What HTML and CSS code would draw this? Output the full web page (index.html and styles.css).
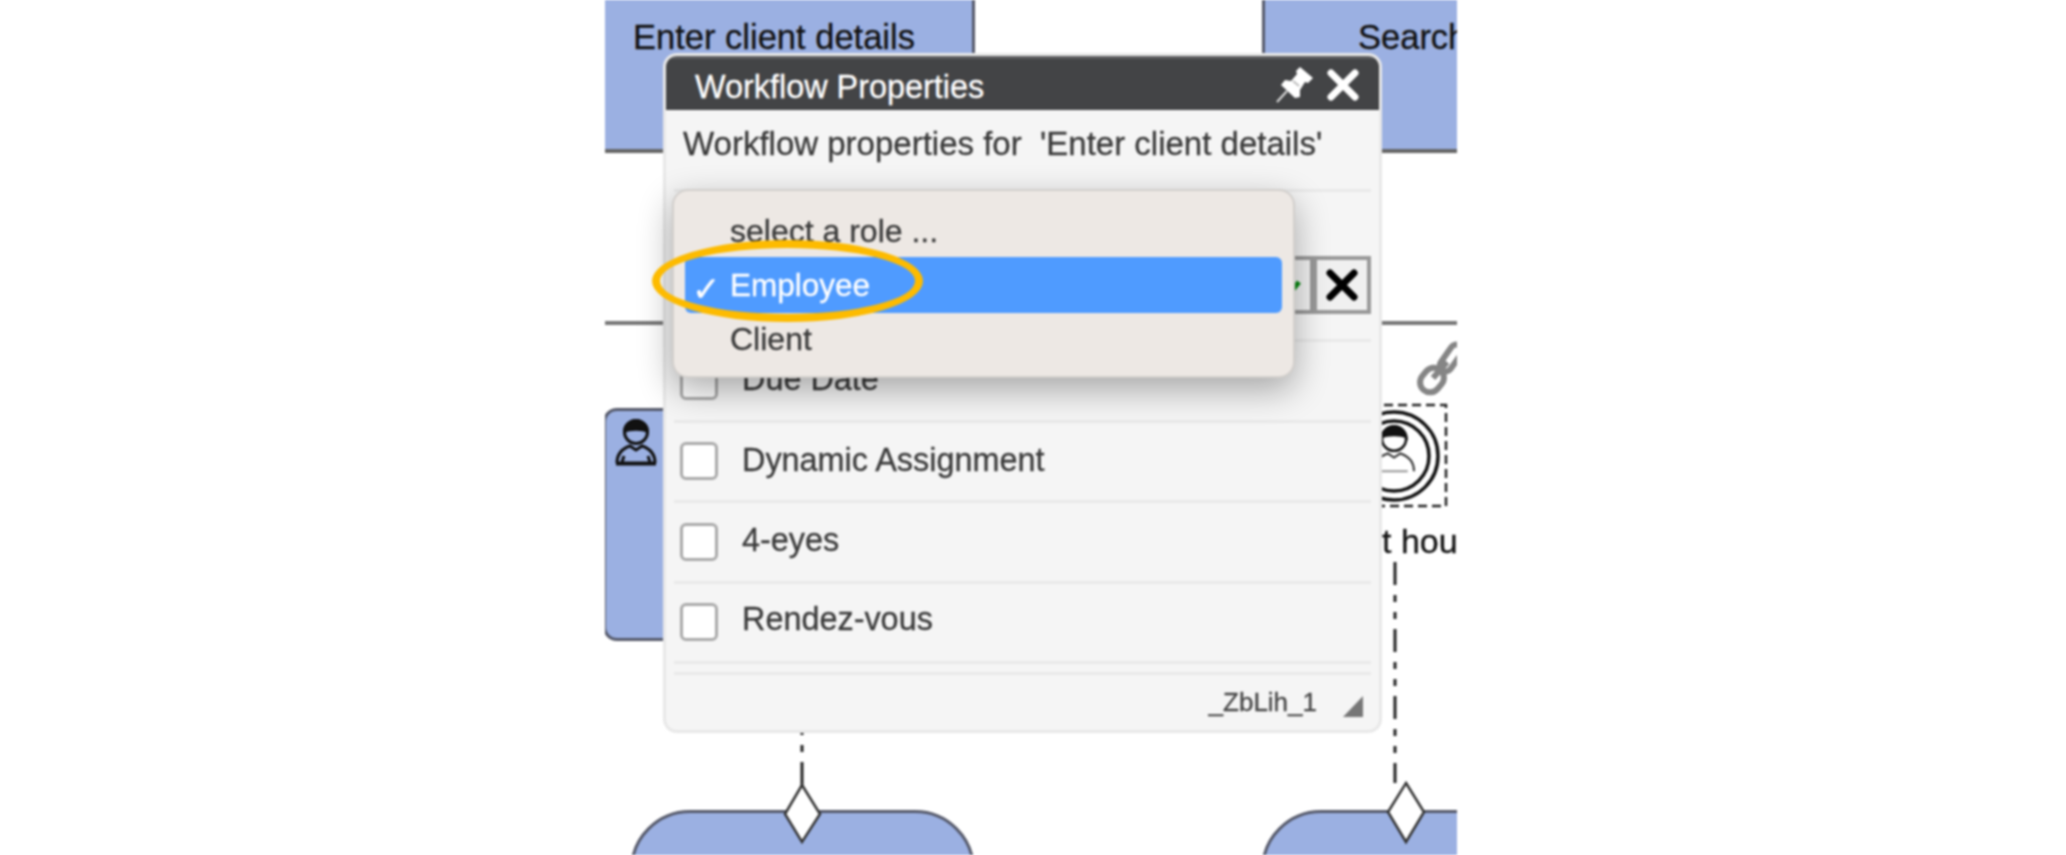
FILE: index.html
```html
<!DOCTYPE html>
<html lang="en">
<head>
    <meta charset="UTF-8">
    <meta name="viewport" content="width=device-width, initial-scale=1.0">
    <title>Workflow Properties</title>
    <link rel="stylesheet" href="styles.css">
</head>
<body>
<div class="stage">
    <!-- diagram behind the dialog -->
    <div class="node node-top node-enter">Enter client details</div>
    <div class="node node-top node-search">Search</div>
    <div class="node node-lane">
        <svg class="person person-lane" viewBox="0 0 42 48">
            <path d="M9 14a12 12 0 0 1 24 0c-6-3-18-3-24 0z" fill="#111" stroke="#111" stroke-width="2"/>
            <circle cx="21" cy="14" r="11.5" fill="none" stroke="#111" stroke-width="3"/>
            <path d="M2 45c0-10 7-15 13-17l6 4 6-4c6 2 13 7 13 17" fill="none" stroke="#111" stroke-width="3"/>
            <path d="M9 38l-2 6M33 38l2 6" stroke="#111" stroke-width="3"/>
            <path d="M1 45.500h40" stroke="#111" stroke-width="4"/>
        </svg>
    </div>
    <div class="node node-bottom node-bottom-left"></div>
    <div class="node node-bottom node-bottom-right"></div>
    <div class="lane-line"></div>
    <div class="hours-label">t hou</div>

    <svg class="edges" viewBox="0 0 852 855">
        <path class="flow" d="M197 785V733"/>
        <path class="flow" d="M790 562V783"/>
        <polygon class="gate" points="197,785 215,814 197,842 180,814"/>
        <polygon class="gate" points="801,783 819,812 801,842 783,812"/>
        <rect class="selection" x="737" y="405" width="104" height="101"/>
        <circle class="ring" cx="789" cy="456" r="44"/>
        <circle class="ring" cx="789" cy="456" r="35"/>
        <g transform="translate(767 424) scale(1.05)">
            <path d="M9 14a12 12 0 0 1 24 0c-6-3-18-3-24 0z" fill="#111" stroke="#111" stroke-width="2"/>
            <circle cx="21" cy="14" r="11.500" fill="#fff" stroke="#111" stroke-width="2.500"/>
            <path d="M9 14a12 12 0 0 1 24 0c-6-3-18-3-24 0z" fill="#111"/>
            <path d="M2 45c0-10 7-15 13-17l6 4 6-4c6 2 13 7 13 17" fill="none" stroke="#333" stroke-width="2"/>
            <path d="M8 45h26" stroke="#999" stroke-width="2"/>
        </g>
        <g class="chain">
            <rect x="-13" y="-10" width="26" height="20" rx="10" transform="translate(827 380) rotate(-50)"/>
            <rect x="-15" y="-6" width="30" height="12" rx="6" transform="translate(846 358) rotate(-55)"/>
            <path d="M828 378L842 362"/>
        </g>
    </svg>

    <!-- dialog -->
    <div class="dialog">
        <div class="dialog-head">
            <span class="dialog-title">Workflow Properties</span>
            <svg class="pin-icon" viewBox="0 0 37 37">
                <path d="M24 1L37 12l-5 5-3-1-5 8v7l-5 1L5 19l4-5 6 1 6-7-1-3z" fill="#fff"/>
                <path d="M17 15l6 5" stroke="#bbb" stroke-width="2"/>
                <path d="M11 25L1 36" stroke="#ddd" stroke-width="2"/>
            </svg>
            <svg class="close-icon" viewBox="0 0 32 32">
                <path d="M4 4l24 24M28 4L4 28" stroke="#fff" stroke-width="7" stroke-linecap="round"/>
            </svg>
        </div>
        <div class="dialog-intro">Workflow properties for&nbsp;&nbsp;'Enter client details'</div>
        <div class="role-row">
            <button class="square-btn">
                <svg class="ok-icon" viewBox="0 0 30 30">
                    <path d="M6 24l8 5L28 12" fill="none" stroke="#0a8a12" stroke-width="5"/>
                </svg>
            </button>
            <button class="square-btn">
                <svg class="cancel-icon" viewBox="0 0 32 32">
                    <path d="M4 4l24 24M28 4L4 28" stroke="#000" stroke-width="7" stroke-linecap="round"/>
                </svg>
            </button>
        </div>
        <div class="check-row"><span class="box"></span><span>Due Date</span></div>
        <div class="check-row"><span class="box"></span><span>Dynamic Assignment</span></div>
        <div class="check-row"><span class="box"></span><span>4-eyes</span></div>
        <div class="check-row check-row-last"><span class="box"></span><span>Rendez-vous</span></div>
        <div class="dialog-gap"></div>
        <div class="dialog-foot">
            <span class="dialog-id">_ZbLih_1</span>
            <svg class="grip" viewBox="0 0 22 24">
                <path d="M1 23L21 2v21z" fill="#777"/>
            </svg>
        </div>
    </div>

    <!-- open role menu -->
    <div class="menu">
        <div class="menu-item">select a role ...</div>
        <div class="menu-item menu-item-active"><span class="tick">✓</span>Employee</div>
        <div class="menu-item">Client</div>
    </div>
    <div class="callout"></div>
</div>
</body>
</html>
```

FILE: styles.css
```css
body {
    margin: 0;
    background-color: white;
    font-family: "Liberation Sans", Arial, sans-serif;
}

.stage {
    position: relative;
    width: 852px;
    height: 855px;
    margin-left: 605px;
    overflow: hidden;
    filter: blur(0.8px);
    -webkit-text-stroke: 0.3px currentColor;
}

/* diagram */
.node {
    position: absolute;
    box-sizing: border-box;
    background-color: #9bb0e2;
    border: 3px solid #55596a;
    color: #111;
    font-size: 34.500px;
}

.node-top {
    top: -20px;
    width: 402px;
    height: 173px;
    padding-top: 35px;
    border-bottom-width: 4px;
    border-bottom-color: #666;
}

.node-enter {
    left: -32px;
    text-align: center;
}

.node-search {
    left: 657px;
    padding-left: 93px;
}

.node-lane {
    left: -2px;
    top: 408px;
    width: 120px;
    height: 233px;
    border-radius: 14px;
}

.person-lane {
    position: absolute;
    left: 9px;
    top: 7px;
    width: 42px;
    height: 48px;
}

.node-bottom {
    top: 810px;
    width: 345px;
    height: 120px;
    border-radius: 62px;
}

.node-bottom-left {
    left: 25px;
}

.node-bottom-right {
    left: 656px;
}

.lane-line {
    position: absolute;
    left: 0;
    right: 0;
    top: 321px;
    height: 4px;
    background-color: #777;
}

.hours-label {
    position: absolute;
    left: 777px;
    top: 521px;
    font-size: 34px;
    line-height: 40px;
    white-space: nowrap;
    color: #111;
}

.edges {
    position: absolute;
    left: 0;
    top: 0;
    width: 852px;
    height: 855px;
}

.flow {
    fill: none;
    stroke: #222;
    stroke-width: 3;
    stroke-dasharray: 23 10 7 10 7 10;
}

.gate {
    fill: white;
    stroke: #333;
    stroke-width: 2.5;
}

.selection {
    fill: none;
    stroke: #222;
    stroke-width: 2.5;
    stroke-dasharray: 9 5;
}

.ring {
    fill: none;
    stroke: #111;
    stroke-width: 3.500;
}

.chain {
    fill: none;
    stroke: #858585;
    stroke-width: 6;
}

/* dialog */
.dialog {
    position: absolute;
    left: 58px;
    top: 53px;
    box-sizing: border-box;
    display: flex;
    flex-direction: column;
    width: 719px;
    height: 680px;
    border: 3px solid #e8e8e8;
    border-radius: 14px;
    background-color: #f5f5f5;
    color: #3a3a3a;
    font-size: 32.400px;
    overflow: hidden;
}

.dialog-head {
    display: flex;
    align-items: center;
    flex: none;
    height: 54px;
    box-sizing: border-box;
    padding: 0 20px 0 29px;
    background-color: #434446;
    border-top: 3px solid #5c5d5f;
}

.dialog-title {
    flex: 1;
    padding-top: 5px;
    color: white;
}

.pin-icon {
    width: 37px;
    height: 37px;
    margin-right: 14px;
}

.close-icon {
    width: 32px;
    height: 32px;
}

.dialog-intro {
    flex: none;
    box-sizing: border-box;
    height: 82px;
    margin: 0 8px;
    padding: 15px 0 0 9px;
    border-bottom: 3px solid #e9e9e9;
    font-size: 33px;
}

.role-row {
    display: flex;
    justify-content: flex-end;
    flex: none;
    box-sizing: border-box;
    height: 150px;
    margin: 0 8px;
    padding-top: 64px;
    border-bottom: 3px solid #e9e9e9;
}

.square-btn {
    box-sizing: border-box;
    display: flex;
    align-items: center;
    justify-content: center;
    width: 57px;
    height: 58px;
    margin: 0;
    padding: 0;
    background-color: #f0f0f0;
    border: 4px solid #999;
}

.square-btn + .square-btn {
    border-left-width: 3px;
}

.ok-icon {
    width: 30px;
    height: 30px;
}

.cancel-icon {
    width: 32px;
    height: 32px;
}

.check-row {
    display: flex;
    align-items: center;
    gap: 24px;
    flex: none;
    box-sizing: border-box;
    height: 80.500px;
    margin: 0 8px;
    padding-left: 6px;
    border-bottom: 3px solid #e9e9e9;
}

.check-row span:last-child {
    padding-bottom: 2px;
}

.check-row-last span:last-child {
    padding-bottom: 5px;
}

.box {
    flex: none;
    box-sizing: border-box;
    width: 38px;
    height: 38px;
    background-color: white;
    border: 3px solid #aaa;
    border-radius: 6px;
}

.dialog-gap {
    flex: none;
    height: 8px;
    margin: 0 8px;
    border-bottom: 3px solid #e9e9e9;
}

.dialog-foot {
    display: flex;
    align-items: center;
    justify-content: flex-end;
    flex: 1;
    padding: 0 14px 0 0;
}

.dialog-id {
    margin-right: 24px;
    font-size: 26px;
    color: #444;
}

.grip {
    width: 24px;
    height: 24px;
    margin-top: 6px;
}

/* menu over the dialog */
.menu {
    position: absolute;
    left: 67px;
    top: 189px;
    box-sizing: border-box;
    width: 623px;
    height: 189px;
    padding: 14px 11px;
    background-color: #ede8e4;
    border: 2px solid #d2cfcc;
    border-radius: 16px;
    box-shadow: 0 12px 34px rgba(0, 0, 0, 0.32);
    color: #3a3a3a;
    font-size: 32px;
}

.menu-item {
    position: relative;
    box-sizing: border-box;
    height: 54px;
    padding-left: 45px;
    line-height: 52px;
}

.menu-item-active {
    height: 56px;
    margin-top: -2px;
    line-height: 56px;
    background-color: #4f9bff;
    border-radius: 6px;
    color: white;
    font-size: 31.500px;
}

.tick {
    position: absolute;
    left: 7px;
    top: 4px;
    font-family: "DejaVu Sans", sans-serif;
    font-size: 34px;
    font-weight: bold;
}

.callout {
    position: absolute;
    left: 47px;
    top: 240px;
    box-sizing: border-box;
    width: 271px;
    height: 82px;
    border: 8px solid #fdbb00;
    border-radius: 50%;
}
```
